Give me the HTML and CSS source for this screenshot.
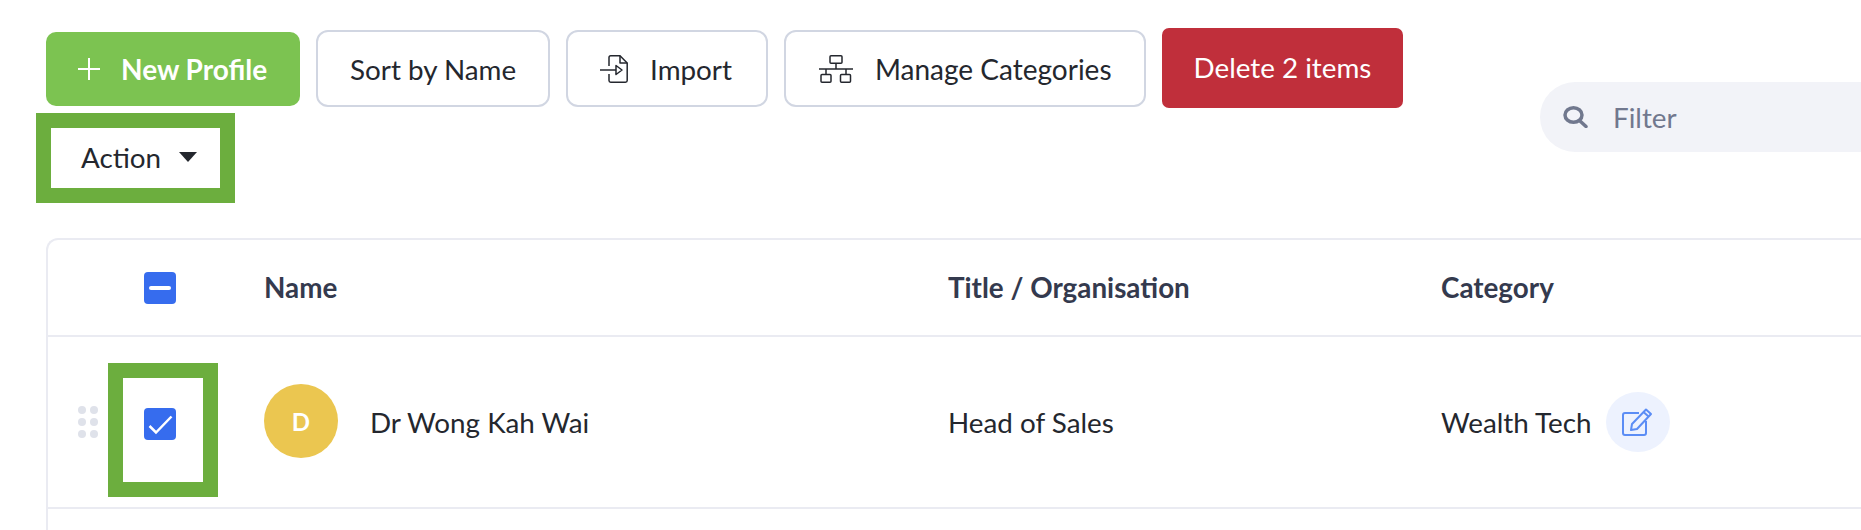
FILE: index.html
```html
<!DOCTYPE html>
<html lang="en">
<head>
    <meta charset="UTF-8">
    <meta name="viewport" content="width=device-width, initial-scale=1.0">
    <title>Profiles</title>
    <link rel="stylesheet" href="styles.css">
</head>
<body>
    <div class="toolbar">
        <div class="actions">
            <div class="button-row">
                <button class="btn btn-new">
                    <svg class="icon-plus" viewBox="0 0 22 22"><path d="M11 0V22M0 11H22" fill="none" stroke="#fff" stroke-width="2"/></svg>
                    New Profile
                </button>
                <button class="btn btn-outline">Sort by Name</button>
                <button class="btn btn-outline btn-import">
                    <svg class="icon-import" viewBox="0 0 28 28" fill="none" stroke="#24272e" stroke-width="1.5" stroke-linejoin="round">
                        <path d="M9 11V2.500Q9 .8 10.700 .8H20L27.200 8V25.500Q27.200 27.200 25.500 27.200H10.700Q9 27.200 9 25.500V19"/>
                        <path d="M20 .8V8H27.200"/>
                        <path d="M0 15H16"/>
                        <path d="M16 10.500L22 15L16 19.500Z"/>
                    </svg>
                    Import
                </button>
                <button class="btn btn-outline btn-manage">
                    <svg class="icon-tree" viewBox="0 0 34 28" fill="none" stroke="#24272e" stroke-width="1.5" stroke-linejoin="round">
                        <rect x="11" y=".8" width="12" height="7.500" rx="1"/>
                        <path d="M17 8.300V14M0 14H34M7 14V19.500M27 14V19.500"/>
                        <rect x="2" y="19.500" width="10" height="7.700" rx="1"/>
                        <rect x="21.500" y="19.500" width="10" height="7.700" rx="1"/>
                    </svg>
                    Manage Categories
                </button>
                <button class="btn btn-delete">Delete 2 items</button>
            </div>
            <div class="action-box">
                <span>Action</span>
                <span class="caret"></span>
            </div>
        </div>
        <div class="filter">
            <svg class="icon-search" viewBox="0 0 25 22" fill="none" stroke="#71788e" stroke-width="3.500" stroke-linecap="round">
                <ellipse cx="10.500" cy="9" rx="8.500" ry="7.200"/>
                <path d="M17 15L23 20.500"/>
            </svg>
            <span>Filter</span>
        </div>
    </div>

    <div class="table">
        <div class="row row-head">
            <div></div>
            <div class="check-cell">
                <span class="checkbox">
                    <svg viewBox="0 0 32 32"><path d="M7 16H25" stroke="#fff" stroke-width="4" stroke-linecap="round"/></svg>
                </span>
            </div>
            <div>Name</div>
            <div>Title / Organisation</div>
            <div>Category</div>
        </div>
        <div class="row row-body">
            <div class="drag-handle">
                <i></i><i></i><i></i><i></i><i></i><i></i>
            </div>
            <div class="check-cell check-marked">
                <span class="checkbox">
                    <svg viewBox="0 0 32 32"><path d="M5.500 18L12 24.500L27.500 8.500" fill="none" stroke="#fff" stroke-width="2.500"/></svg>
                </span>
            </div>
            <div class="name-cell">
                <span class="avatar">D</span>
                <span>Dr Wong Kah Wai</span>
            </div>
            <div>Head of Sales</div>
            <div class="category-cell">
                <span>Wealth Tech</span>
                <span class="edit-btn">
                    <svg viewBox="0 0 32 28" fill="none" stroke="#5b8df5" stroke-width="2" stroke-linejoin="round">
                        <path d="M17 5H3Q1 5 1 7V25Q1 27 3 27H22Q24 27 24 25V13"/>
                        <path d="M9 22L10 16L24 1.500L29 6L15 21Z"/>
                        <path d="M21.500 4L26.500 8.500"/>
                    </svg>
                </span>
            </div>
        </div>
    </div>
</body>
</html>
```

FILE: styles.css
```css
body {
    font-family: Lato, "Liberation Sans", sans-serif;
    display: flex;
    flex-direction: column;
    margin: 0;
    height: 100vh;
    overflow: hidden;
    background-color: #fff;
    color: #24272e;
    font-size: 27.8px;
}
.toolbar {
    display: flex;
    padding: 28px 0 0 36px;
}
.actions {
    flex: 0 0 1504px;
}
.button-row {
    display: flex;
    align-items: center;
    gap: 16px;
    padding-left: 10px;
}
.btn {
    display: flex;
    align-items: center;
    font-family: inherit;
    font-size: 27.8px;
    color: #24272e;
    border: none;
    background: none;
    white-space: nowrap;
}
.btn-new {
    width: 254px;
    height: 74px;
    margin-top: 1px;
    padding: 0 0 0 32px;
    gap: 21px;
    background-color: #7cc351;
    color: #fff;
    font-size: 28px;
    font-weight: 700;
    border-radius: 10px;
}
.btn-outline {
    height: 77px;
    padding: 2px 32px 0;
    border: 2px solid #d1d6e2;
    border-radius: 12px;
    background: #fff;
}
.btn-import {
    padding-right: 34px;
    gap: 22px;
}
.btn-manage {
    padding-left: 33px;
    padding-right: 32px;
    gap: 22px;
    font-size: 28px;
}
.btn-delete {
    height: 80px;
    padding: 0 32px 2px;
    background-color: #c02f3b;
    color: #fff;
    border-radius: 7px;
}
.icon-plus {
    width: 22px;
    height: 22px;
}
.icon-import {
    width: 28px;
    height: 28px;
}
.icon-tree {
    width: 34px;
    height: 28px;
}
.action-box {
    display: inline-flex;
    align-items: center;
    gap: 18px;
    margin-top: 5px;
    width: 139px;
    height: 58px;
    padding: 0 0 2px 30px;
    border: 15px solid #6cae3e;
}
.caret {
    width: 0;
    height: 0;
    border-left: 9px solid transparent;
    border-right: 9px solid transparent;
    border-top: 10px solid #24272e;
}
.filter {
    flex: 1;
    display: flex;
    align-items: center;
    gap: 25px;
    height: 70px;
    margin-top: 54px;
    padding-left: 23px;
    background-color: #f2f3f8;
    border-radius: 35px 0 0 35px;
    color: #71788e;
}
.icon-search {
    width: 25px;
    height: 22px;
}
.table {
    flex: 1;
    margin: 35px 0 0 46px;
    border-top: 2px solid #eaebf2;
    border-left: 2px solid #eaebf2;
    border-top-left-radius: 12px;
}
.row {
    display: grid;
    grid-template-columns: 60px 156px 684px 493px 1fr;
    align-items: center;
    border-bottom: 2px solid #eaebf2;
}
.row-head {
    height: 95px;
    font-weight: 700;
    color: #343a4e;
}
.row-body {
    height: 170px;
}
.check-cell {
    display: flex;
    padding-left: 36px;
}
.check-marked {
    box-sizing: border-box;
    width: 110px;
    height: 134px;
    margin-top: 16px;
    padding: 0 0 12px 21px;
    align-items: center;
    border: 15px solid #6cae3e;
}
.checkbox {
    display: flex;
    width: 32px;
    height: 32px;
    background-color: #366cee;
    border-radius: 4px;
}
.drag-handle {
    display: grid;
    grid-template-columns: 8px 8px;
    gap: 4px;
    margin: 0 0 0 30px;
}
.drag-handle i {
    width: 8px;
    height: 8px;
    border-radius: 50%;
    background-color: #dfe2ea;
}
.name-cell {
    display: flex;
    align-items: center;
    gap: 32px;
}
.avatar {
    display: flex;
    align-items: center;
    justify-content: center;
    width: 74px;
    height: 74px;
    margin-bottom: 2px;
    border-radius: 50%;
    background-color: #ebc650;
    color: #fff;
    font-weight: 700;
    font-size: 24px;
}
.category-cell {
    display: flex;
    align-items: center;
    gap: 14px;
}
.edit-btn {
    display: flex;
    align-items: center;
    justify-content: center;
    width: 64px;
    height: 60px;
    border-radius: 50%;
    background-color: #edf2fe;
}
.edit-btn svg {
    width: 32px;
    height: 28px;
}
```
